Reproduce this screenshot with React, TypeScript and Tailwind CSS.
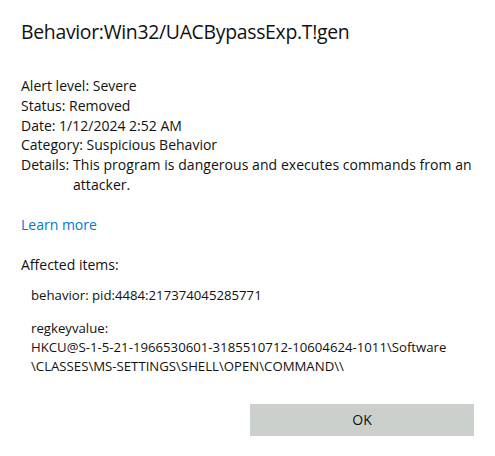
const font = { fontFamily: '"Segoe UI", "Open Sans", "Noto Sans", sans-serif' }

const details = [
  { label: "Alert level:", value: "Severe" },
  { label: "Status:", value: "Removed" },
  { label: "Date:", value: "1/12/2024 2:52 AM" },
  { label: "Category:", value: "Suspicious Behavior" },
]

export default function App() {
  return (
    <div
      className="w-[495px] h-[456px] bg-white text-[#111] overflow-hidden px-[21px] pt-[18px]"
      style={font}
    >
      <h1 className="text-[19.4px] leading-[28px] font-normal tracking-[-0.3px]">
        Behavior:Win32/UACBypassExp.T!gen
      </h1>

      <div className="mt-[30px] text-[14px] leading-[19.8px]">
        {details.map((d) => (
          <p key={d.label}>
            {d.label} {d.value}
          </p>
        ))}
        <div className="flex">
          <span className="w-[52px] shrink-0">Details:</span>
          <span className="flex-1 tracking-[0.05px]">
            This program is dangerous and executes commands from an attacker.
          </span>
        </div>
      </div>

      <a className="block mt-[20px] text-[14px] leading-[20px] text-[#0078d7]">
        Learn more
      </a>

      <p className="mt-[20px] text-[14px] leading-[20px]">Affected items:</p>

      <div className="pl-[10px] text-[13.2px] leading-[19px]">
        <p className="mt-[11.5px]">behavior: pid:4484:217374045285771</p>
        <div className="mt-[14px]">
          <p>regkeyvalue:</p>
          <p className="whitespace-nowrap">HKCU@S-1-5-21-1966530601-3185510712-10604624-1011\Software</p>
          <p>\CLASSES\MS-SETTINGS\SHELL\OPEN\COMMAND\\</p>
        </div>
      </div>

      <div className="flex justify-end mt-[27.5px]">
        <button className="w-[224px] h-[32px] bg-[#ccd0cd] text-[14px] text-[#111]">
          OK
        </button>
      </div>
    </div>
  )
}
